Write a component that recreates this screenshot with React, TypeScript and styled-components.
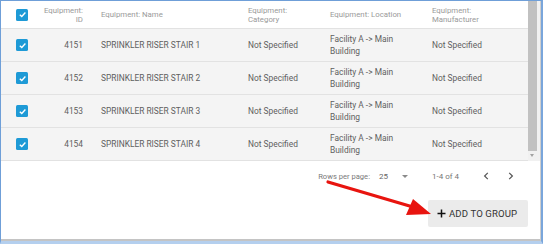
import React from 'react';
import styled, { createGlobalStyle } from 'styled-components';

const GlobalStyle = createGlobalStyle`
  html, body {
    margin: 0;
    padding: 0;
    background: #ffffff;
  }
  body {
    font-family: Roboto, "Liberation Sans", Arial, sans-serif;
  }
`;

const Frame = styled.div`
  position: relative;
  width: 543px;
  height: 244px;
  box-sizing: border-box;
  border-top: 1px solid #6f9fd8;
  border-left: 1px solid #6f9fd8;
  border-right: 2px solid #7aa6db;
  border-bottom: 3px solid #b4cfee;
  background: #fff;
  overflow: hidden;
`;

const Card = styled.div`
  display: flex;
  flex-direction: column;
  height: 100%;
  box-sizing: border-box;
  border-right: 1px solid #cfcfcf;
  border-bottom: 2px solid #c4c4c4;
`;

const TableArea = styled.div`
  display: flex;
  flex-direction: row;
`;

const Table = styled.div`
  flex: 1;
`;

const Row = styled.div<{ $head?: boolean }>`
  display: grid;
  grid-template-columns: 39px 61px 147px 82px 102px 1fr;
  align-items: center;
  height: ${p => (p.$head ? '28px' : '33px')};
  box-sizing: border-box;
  border-bottom: 1px solid #e2e2e2;
  background: ${p => (p.$head ? '#ffffff' : '#f4f4f4')};
`;

const Cell = styled.div<{ $right?: boolean; $head?: boolean }>`
  font-size: ${p => (p.$head ? '7.8px' : '8.4px')};
  line-height: ${p => (p.$head ? '9px' : '12px')};
  color: ${p => (p.$head ? '#9a9a9a' : '#5f5f5f')};
  text-align: ${p => (p.$right ? 'right' : 'left')};
  padding-right: ${p => (p.$right ? '18px' : '6px')};
`;

const CheckCell = styled.div`
  padding-left: 15px;
  display: flex;
  align-items: center;
`;

const Box = styled.span`
  display: inline-flex;
  align-items: center;
  justify-content: center;
  width: 12px;
  height: 12px;
  border-radius: 1.5px;
  background: #1e9ad6;
`;

const Scrollbar = styled.div`
  width: 12px;
  background: #f1f1f1;
  display: flex;
  flex-direction: column;
  align-items: flex-start;
`;

const Thumb = styled.div`
  width: 9px;
  height: 150px;
  background: #c1c1c1;
`;

const ScrollArrow = styled.div`
  margin: 3px 0 0 2px;
  width: 0;
  height: 0;
  border-left: 2.5px solid transparent;
  border-right: 2.5px solid transparent;
  border-top: 3px solid #a3a3a3;
`;

const Pagination = styled.div`
  display: flex;
  align-items: center;
  justify-content: flex-end;
  height: 30px;
  padding-right: 17px;
  font-size: 7.6px;
  color: #7a7a7a;
`;

const PerPage = styled.span`
  margin-right: 9px;
`;

const Select = styled.span`
  display: inline-flex;
  align-items: center;
  gap: 14px;
  color: #666;
  font-size: 8px;
`;

const Caret = styled.span`
  width: 0;
  height: 0;
  border-left: 3px solid transparent;
  border-right: 3px solid transparent;
  border-top: 3px solid #8a8a8a;
`;

const Range = styled.span`
  margin-left: 24px;
  margin-right: 14px;
  color: #777;
  font-size: 8px;
`;

const NavButton = styled.span`
  width: 25px;
  display: inline-flex;
  justify-content: center;
  align-items: center;
`;

const Actions = styled.div`
  display: flex;
  justify-content: flex-end;
  padding: 9px 12px 0 0;
`;

const AddButton = styled.button`
  display: inline-flex;
  align-items: center;
  gap: 3px;
  height: 27px;
  width: 100px;
  padding: 0 0 0 9px;
  border: none;
  border-radius: 2px;
  background: #ebebeb;
  color: #333;
  font-family: Roboto, "Liberation Sans", Arial, sans-serif;
  font-size: 9.6px;
  letter-spacing: 0.1px;
`;

const Arrow = styled.svg`
  position: absolute;
  left: 0;
  top: 0;
  pointer-events: none;
`;

const Check = () => (
  <Box>
    <svg width="9" height="9" viewBox="0 0 10 10">
      <path d="M2 5.2 L4.2 7.2 L8.2 2.8" fill="none" stroke="#fff" strokeWidth="1.5" />
    </svg>
  </Box>
);

const Chevron = ({ dir }: { dir: 'left' | 'right' }) => (
  <svg width="6" height="8" viewBox="0 0 6 8">
    <path
      d={dir === 'left' ? 'M4.8 0.8 L1.6 4 L4.8 7.2' : 'M1.2 0.8 L4.4 4 L1.2 7.2'}
      fill="none"
      stroke="#555"
      strokeWidth="1.2"
    />
  </svg>
);

const rows = [4151, 4152, 4153, 4154];

export default function App() {
  return (
    <>
      <GlobalStyle />
      <Frame>
        <Card>
          <TableArea>
            <Table>
              <Row $head>
                <CheckCell><Check /></CheckCell>
                <Cell $head $right>Equipment:<br />ID</Cell>
                <Cell $head>Equipment: Name</Cell>
                <Cell $head>Equipment:<br />Category</Cell>
                <Cell $head>Equipment: Location</Cell>
                <Cell $head>Equipment:<br />Manufacturer</Cell>
              </Row>
              {rows.map((id, i) => (
                <Row key={id}>
                  <CheckCell><Check /></CheckCell>
                  <Cell $right>{id}</Cell>
                  <Cell>SPRINKLER RISER STAIR {i + 1}</Cell>
                  <Cell>Not Specified</Cell>
                  <Cell>Facility A -&gt; Main<br />Building</Cell>
                  <Cell>Not Specified</Cell>
                </Row>
              ))}
            </Table>
            <Scrollbar>
              <Thumb />
              <ScrollArrow />
            </Scrollbar>
          </TableArea>
          <Pagination>
            <PerPage>Rows per page:</PerPage>
            <Select>25<Caret /></Select>
            <Range>1-4 of 4</Range>
            <NavButton><Chevron dir="left" /></NavButton>
            <NavButton><Chevron dir="right" /></NavButton>
          </Pagination>
          <Actions>
            <AddButton>
              <svg width="9" height="9" viewBox="0 0 9 9">
                <path d="M4.5 0.5 V8.5 M0.5 4.5 H8.5" stroke="#111" strokeWidth="1.5" />
              </svg>
              ADD TO GROUP
            </AddButton>
          </Actions>
        </Card>
        <Arrow width="543" height="244" viewBox="0 0 543 244">
          <path d="M327 181 L412 206" stroke="#e8140f" strokeWidth="3.2" strokeLinecap="round" />
          <polygon points="430,213 405,214 412,198" fill="#e8140f" />
        </Arrow>
      </Frame>
    </>
  );
}
